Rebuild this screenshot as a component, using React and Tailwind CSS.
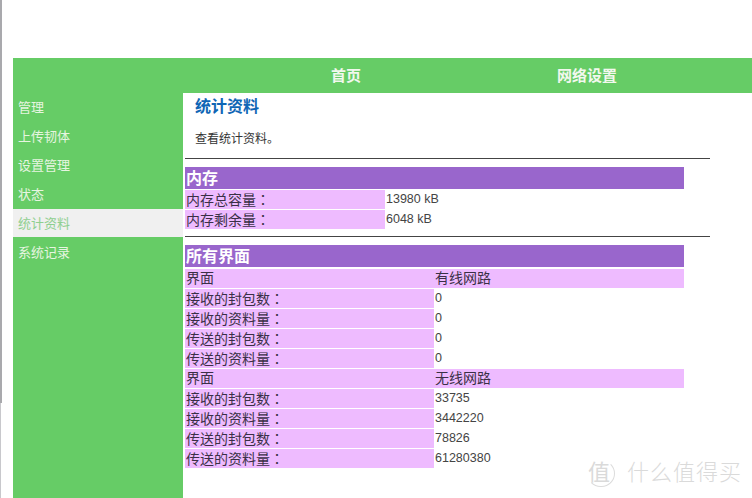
const FONT = "font-['Liberation_Sans','Noto_Sans_CJK_SC',sans-serif]";

const menu = ['管理', '上传韧体', '设置管理', '状态', '统计资料', '系统记录'];

const memoryRows = [
  ['内存总容量', '13980 kB'],
  ['内存剩余量', '6048 kB'],
];

const interfaceRows = [
  ['界面', '有线网路', true],
  ['接收的封包数', '0'],
  ['接收的资料量', '0'],
  ['传送的封包数', '0'],
  ['传送的资料量', '0'],
  ['界面', '无线网路', true],
  ['接收的封包数', '33735'],
  ['接收的资料量', '3442220'],
  ['传送的封包数', '78826'],
  ['传送的资料量', '61280380'],
];

const Row = ({ label, value, labelWidth, head }) => (
  <div className="flex h-5 items-start text-sm text-[#3a3046]">
    <div className={`${labelWidth} h-[19px] shrink-0 bg-[#eebbff] pl-px leading-[18px]`}>
      {label}
      {!head && <span className="font-['Noto_Sans_CJK_TC',sans-serif]">：</span>}
    </div>
    {head ? (
      <div className="h-[19px] w-[250px] bg-[#eebbff] pl-px leading-[18px]">{value}</div>
    ) : (
      <div className="pl-px text-[12.5px] leading-[18px] text-[#444]">{value}</div>
    )}
  </div>
);

const SectionTitle = ({ children }) => (
  <div className="h-[22px] w-[499px] bg-[#9966cc] pl-px text-base leading-[24px] font-bold text-white">{children}</div>
);

const Watermark = () => (
  <div className="absolute top-[460px] left-[587px] flex text-[#dadada]">
    <div className="h-[27px] w-[28px] rounded-full border border-[#dcdcdc] border-t-transparent border-l-transparent text-[22px] leading-[24px]">值</div>
    <div className="ml-[12px] text-[22px] leading-[26px] tracking-[1px] font-light">什么值得买</div>
  </div>
);

export default function App() {
  return (
    <div className={`${FONT} relative flex h-[498px] w-[752px] overflow-hidden bg-white`}>
      <div className="flex w-[3px] shrink-0 flex-col">
        <div className="h-[403px] w-[2px] bg-[#a9a9ad]" />
        <div className="h-[95px] w-px bg-[#c8c8cc]" />
      </div>
      <div className="ml-[10px] flex flex-1 flex-col pt-[58px]">
        <div className="flex h-[35px] bg-[#66cc66] text-[15px] leading-[35px] font-bold text-[#f2f8ee]">
          <div className="ml-[318px] w-[226px]">首页</div>
          <div>网络设置</div>
        </div>
        <div className="flex flex-1">
          <div className="flex w-[170px] shrink-0 flex-col bg-[#66cc66] text-[13px] text-[#e6f5e0]">
            {menu.map((item) => {
              const active = item === '统计资料';
              return (
                <div
                  key={item}
                  className={`pl-[5px] leading-[29px] ${active ? 'mb-px h-[28px] bg-[#f0f0f0] text-[#8fcf8f]' : 'h-[29px]'}`}
                >
                  {item}
                </div>
              );
            })}
          </div>
          <div className="flex-1 pl-[2px]">
            <h1 className="mt-[2px] pl-[10px] text-base leading-[24px] font-bold text-[#0f66b5]">统计资料</h1>
            <p className="mt-[10px] pl-[10px] text-xs leading-5 text-[#333]">查看统计资料。</p>
            <hr className="mt-[9px] w-[525px] border-t border-[#444]" />
            <div className="mt-2">
              <SectionTitle>内存</SectionTitle>
              <div className="mt-px">
                {memoryRows.map(([label, value]) => (
                  <Row key={label} label={label} value={value} labelWidth="w-[200px]" />
                ))}
              </div>
            </div>
            <hr className="mt-[6px] w-[525px] border-t border-[#444]" />
            <div className="mt-2">
              <SectionTitle>所有界面</SectionTitle>
              <div className="mt-[2px]">
                {interfaceRows.map(([label, value, head], i) => (
                  <Row key={i} label={label} value={value} labelWidth="w-[249px]" head={head} />
                ))}
              </div>
            </div>
          </div>
        </div>
      </div>
      <Watermark />
    </div>
  );
}
